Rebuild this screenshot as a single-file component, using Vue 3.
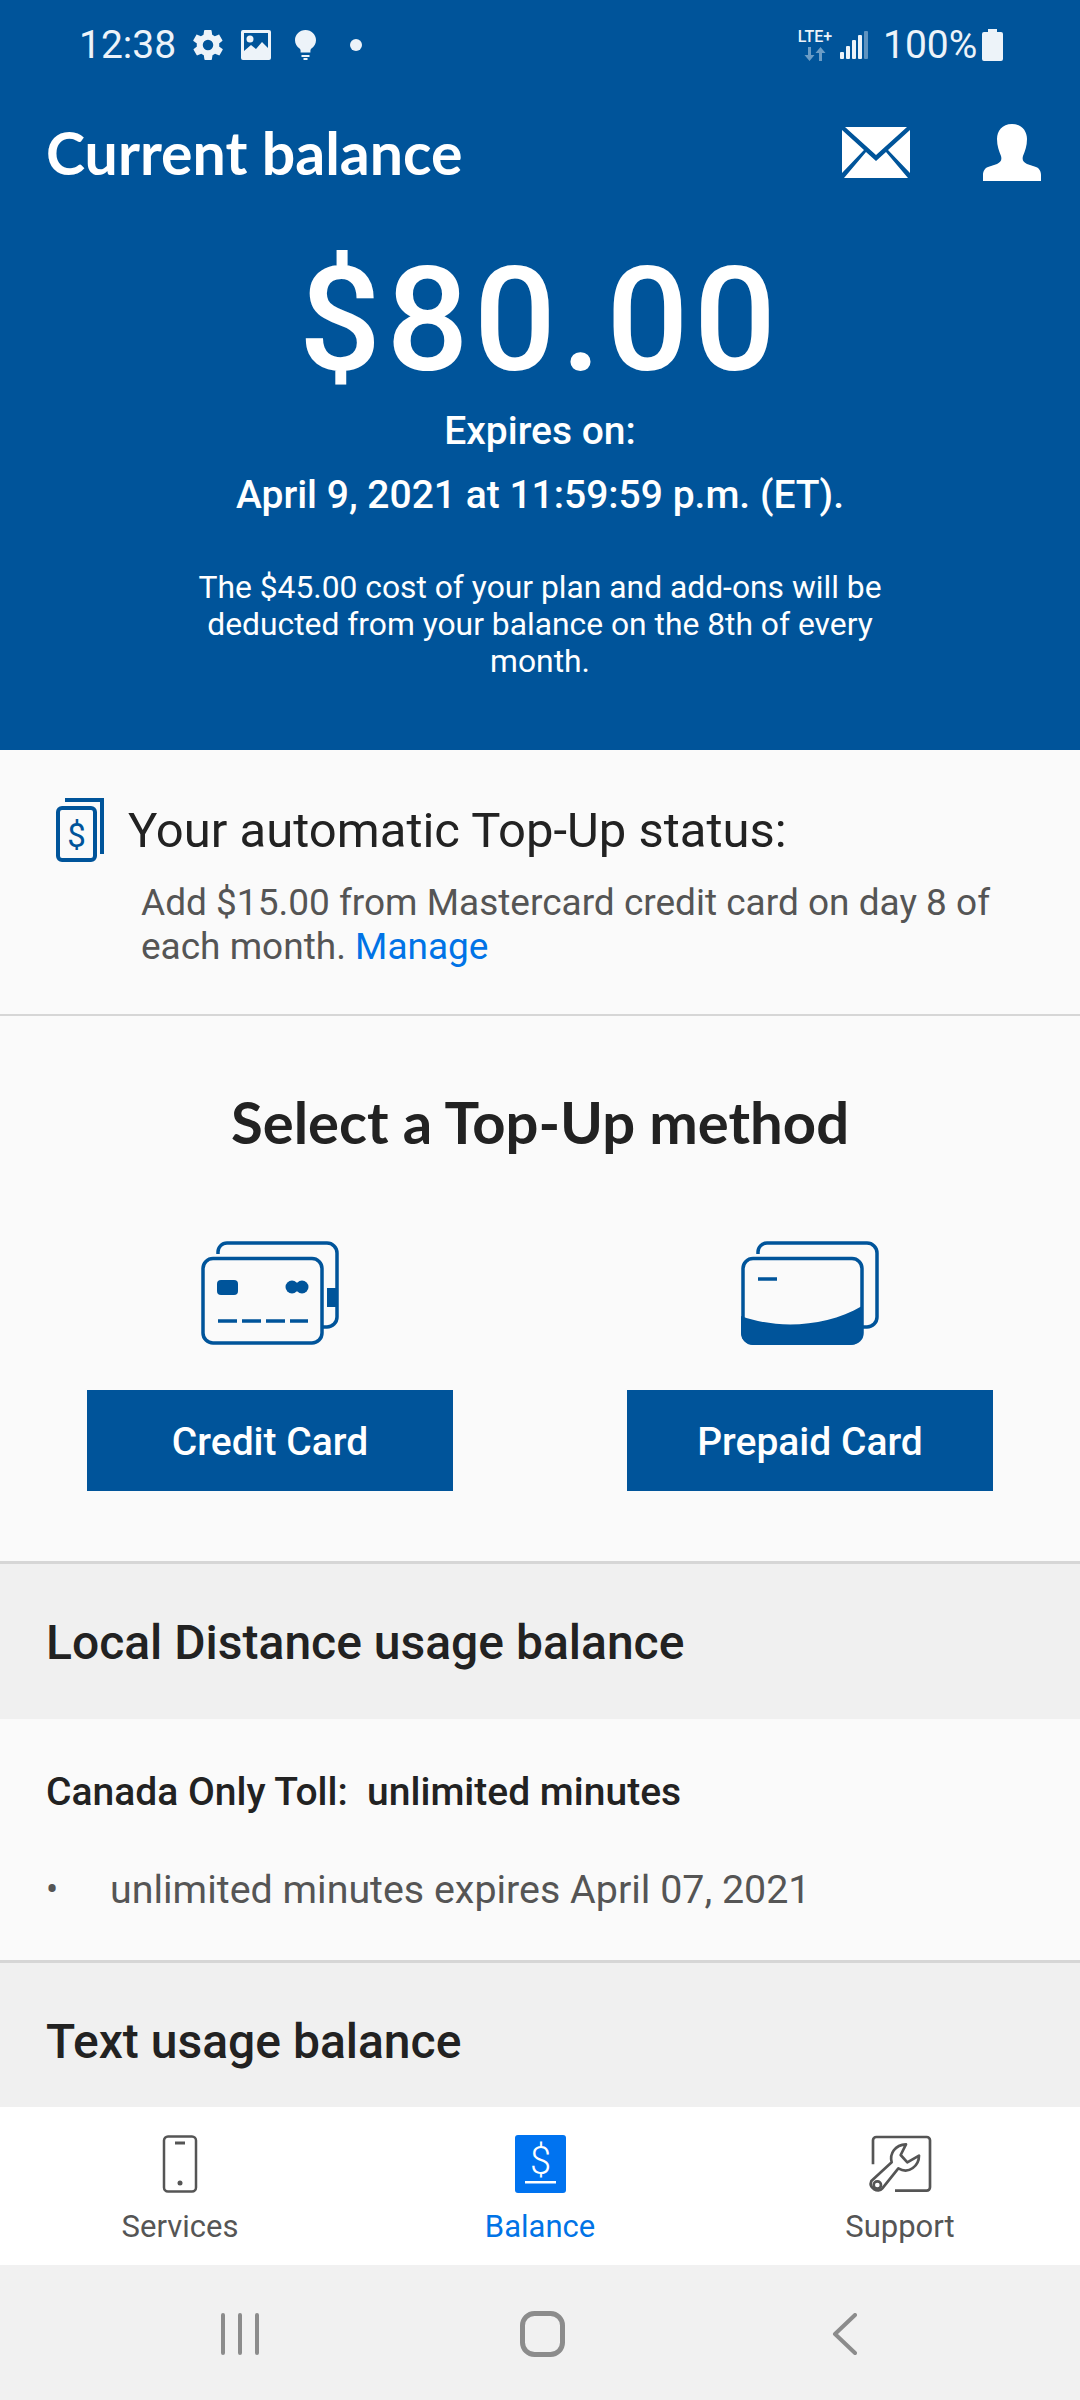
<script setup>
const tabs = [
  { key: 'services', label: 'Services' },
  { key: 'balance', label: 'Balance', active: true },
  { key: 'support', label: 'Support' }
]
</script>

<template>
  <div class="screen">
    <header class="hero">
      <div class="status-bar">
        <span class="clock">12:38</span>
        <svg class="st-gear" viewBox="0 0 24 24"><path fill-rule="evenodd" d="M19.4 13c.1-.3.1-.7.1-1s0-.7-.1-1l2.1-1.6c.2-.2.2-.4.1-.6l-2-3.5c-.1-.2-.4-.3-.6-.2l-2.5 1c-.5-.4-1.1-.7-1.7-1l-.4-2.6c0-.3-.2-.5-.5-.5h-4c-.3 0-.5.2-.5.5l-.4 2.6c-.6.3-1.2.6-1.7 1l-2.5-1c-.2-.1-.5 0-.6.2l-2 3.5c-.1.2-.1.5.1.6L4.6 11c-.1.3-.1.7-.1 1s0 .7.1 1l-2.1 1.6c-.2.2-.2.4-.1.6l2 3.5c.1.2.4.3.6.2l2.5-1c.5.4 1.1.7 1.7 1l.4 2.6c0 .3.2.5.5.5h4c.3 0 .5-.2.5-.5l.4-2.6c.6-.3 1.2-.6 1.7-1l2.5 1c.2.1.5 0 .6-.2l2-3.5c.1-.2.1-.5-.1-.6L19.4 13zM12 15.500a3.500 3.500 0 1 1 0-7 3.500 3.500 0 0 1 0 7z"/></svg>
        <svg class="st-image" viewBox="0 0 30 30"><path fill-rule="evenodd" d="M2 0h26a2 2 0 0 1 2 2v26a2 2 0 0 1-2 2H2a2 2 0 0 1-2-2V2a2 2 0 0 1 2-2zm1 3v18l7-6 5 4 6-7 6 6V3H3zm6 2.500a3.500 3.500 0 1 1 0 7 3.500 3.500 0 0 1 0-7z"/></svg>
        <svg class="st-bulb" viewBox="0 0 21 30"><path d="M10.500 0C4.700 0 0 4.500 0 10.200c0 3.600 1.900 6.300 4.600 8.300.7.500 1 1.300 1 2.200v1.800h9.800v-1.800c0-.9.300-1.700 1-2.200 2.700-2 4.600-4.700 4.600-8.300C21 4.500 16.300 0 10.500 0zM6.500 25h8v2h-8zM8.500 28h4v2h-4z"/></svg>
        <span class="st-dot"></span>
        <span class="st-spacer"></span>
        <span class="st-net">
          <span class="st-lte">LTE+</span>
          <svg class="st-arrows" viewBox="0 0 22 14"><path d="M4 0h3v8h3.500L5.500 14 .5 8H4zM15 14h3V6h3.500L16.500 0l-5 6H15z"/></svg>
        </span>
        <svg class="st-signal" viewBox="0 0 28 28">
          <rect x="0" y="21" width="4" height="7" rx="1" />
          <rect x="6" y="15" width="4" height="13" rx="1" />
          <rect x="12" y="9" width="4" height="19" rx="1" />
          <rect x="18" y="4" width="4" height="24" rx="1" />
          <rect x="24" y="0" width="4" height="28" rx="1" opacity=".4" />
        </svg>
        <span class="st-level">100%</span>
        <svg class="st-battery" viewBox="0 0 21 32"><path d="M6 0h9v3h4a2 2 0 0 1 2 2v25a2 2 0 0 1-2 2H2a2 2 0 0 1-2-2V5a2 2 0 0 1 2-2h4z"/></svg>
      </div>

      <div class="hero-top">
        <h1 class="hero-title">Current balance</h1>
        <svg class="ic-mail" viewBox="0 0 68 51">
          <path d="M3 0h62L34 28zM0 3l22 20L0 46zM68 3v43L46 23zM24 25l10 9 10-9 22 26H2z" />
        </svg>
        <svg class="ic-user" viewBox="0 0 58 57">
          <path d="M29 0c10 0 15 7 15 15 0 7-2 12-4 17-1 4 0 6 4 8l9 3c3 1 5 4 5 8v6H0v-6c0-4 2-7 5-8l9-3c4-2 5-4 4-8-2-5-4-10-4-17C14 7 19 0 29 0z" />
        </svg>
      </div>

      <div class="amount">$80.00</div>
      <div class="expiry">Expires on:</div>
      <div class="expiry">April 9, 2021 at 11:59:59 p.m. (ET).</div>
      <p class="hero-note">The $45.00 cost of your plan and add-ons will be deducted from your balance on the 8th of every month.</p>
    </header>

    <section class="auto">
      <div class="auto-head">
        <svg class="ic-doc" viewBox="0 0 48 64" fill="none" stroke="#00549a">
          <path d="M9 2h37v54" stroke-width="4" />
          <rect x="2" y="10" width="37" height="52" rx="4" stroke-width="4" />
          <text x="20.500" y="49" text-anchor="middle" class="doc-dollar">$</text>
        </svg>
        <span>Your automatic Top-Up status:</span>
      </div>
      <p class="auto-text">Add $15.00 from Mastercard credit card on day 8 of each month. <a class="manage">Manage</a></p>
    </section>

    <section class="method">
      <h2 class="method-title">Select a Top-Up method</h2>
      <div class="method-grid">
        <div class="method-col">
          <svg class="ic-card" viewBox="0 0 138 104" fill="none" stroke="#00549a" stroke-width="3.500">
            <path d="M17 13v-2a9 9 0 0 1 9-9h100a10 10 0 0 1 10 10v64a10 10 0 0 1-10 10h-4" />
            <rect x="2" y="17.500" width="119" height="84.500" rx="10" />
            <rect x="16" y="39" width="21" height="15" rx="4" fill="#00549a" stroke="none" />
            <ellipse cx="91" cy="46" rx="6.500" ry="6.500" fill="#00549a" stroke="none" />
            <ellipse cx="101" cy="46" rx="6.500" ry="6.500" fill="#00549a" stroke="none" />
            <rect x="126" y="47" width="9" height="19" fill="#00549a" stroke="none" />
            <path d="M17 80h90" stroke-dasharray="19 5" />
          </svg>
          <button class="method-btn">Credit Card</button>
        </div>
        <div class="method-col">
          <svg class="ic-card" viewBox="0 0 138 104" fill="none" stroke="#00549a" stroke-width="3.500">
            <path d="M17 13v-2a9 9 0 0 1 9-9h100a10 10 0 0 1 10 10v64a10 10 0 0 1-10 10h-4" />
            <rect x="2" y="17.500" width="119" height="84.500" rx="10" />
            <path d="M17 38h19" />
            <path d="M0 75c34 13 84 12 121-10v27a12 12 0 0 1-12 12H12A12 12 0 0 1 0 92z" fill="#00549a" stroke="none" />
          </svg>
          <button class="method-btn">Prepaid Card</button>
        </div>
      </div>
    </section>

    <h3 class="usage-head">Local Distance usage balance</h3>
    <section class="usage-body">
      <div class="usage-line">Canada Only Toll:&nbsp; unlimited minutes</div>
      <div class="usage-item">
        <span class="usage-bullet">•</span>
        <span>unlimited minutes expires April 07, 2021</span>
      </div>
    </section>
    <h3 class="usage-head usage-head-last">Text usage balance</h3>

    <nav class="tabbar">
      <div v-for="tab in tabs" :key="tab.key" class="tab" :class="{ 'tab-active': tab.active }">
        <svg v-if="tab.key === 'services'" class="tab-icon" viewBox="0 0 60 58" fill="none" stroke="#555" stroke-width="2.500">
          <rect x="14" y="1.500" width="32" height="55" rx="4" />
          <path d="M25 8h10" stroke-width="3" />
          <circle cx="30" cy="48" r="2.500" fill="#555" stroke="none" />
        </svg>
        <svg v-else-if="tab.key === 'balance'" class="tab-icon" viewBox="0 0 60 58">
          <rect x="5" y="0" width="51" height="58" rx="3" fill="#0073f0" />
          <text x="30.500" y="39" text-anchor="middle" class="tab-dollar">$</text>
          <rect x="15" y="46" width="31" height="2.500" fill="#fff" />
        </svg>
        <svg v-else class="tab-icon" viewBox="60 30 180 174" fill="none" stroke="#555" stroke-width="8" stroke-linejoin="round">
          <path d="M69 118V46a10 10 0 0 1 10-10h151a10 10 0 0 1 10 10v141a10 10 0 0 1-10 10h-95" />
          <path d="M64 168l61-56c-7-27 10-52 43-54l-16 32 20 22 35-20c0 28-29 58-62 38l-48 60c-12 15-42 0-33-22z" />
          <circle cx="82" cy="180" r="11" />
        </svg>
        <span class="tab-label">{{ tab.label }}</span>
      </div>
    </nav>

    <div class="sys-nav">
      <svg class="nav-menu" viewBox="0 0 40 42" fill="none" stroke="#8c8c8c" stroke-width="4" stroke-linecap="round">
        <path d="M3 2v38M20 2v38M37 2v38" />
      </svg>
      <svg class="nav-home" viewBox="0 0 45 46" fill="none" stroke="#8c8c8c" stroke-width="5">
        <rect x="2.500" y="2.500" width="40" height="41" rx="12" />
      </svg>
      <svg class="nav-back" viewBox="0 0 25 42" fill="none" stroke="#8c8c8c" stroke-width="4" stroke-linecap="round" stroke-linejoin="round">
        <path d="M23 2L3 21l20 19" />
      </svg>
    </div>
  </div>
</template>

<style>
html, body {
  margin: 0;
  background: #fff;
}
</style>

<style scoped>
.screen {
  width: 1080px;
  height: 2400px;
  overflow: hidden;
  display: flex;
  flex-direction: column;
  font-family: Roboto, "Liberation Sans", sans-serif;
  background: #fafafa;
}

.hero {
  height: 750px;
  flex: none;
  box-sizing: border-box;
  background: #00549a;
  color: #fff;
  text-align: center;
}

.status-bar {
  height: 80px;
  padding: 10px 77px 0 79px;
  display: flex;
  align-items: center;
  color: #edf3f9;
  fill: #edf3f9;
  font-size: 39px;
  line-height: 1;
  box-sizing: border-box;
}

.clock {
  width: 114px;
  text-align: left;
}

.st-gear { width: 36px; height: 36px; margin-right: 15px; margin-left: -3px; }
.st-image { width: 30px; height: 30px; margin-right: 24px; }
.st-bulb { width: 21px; height: 30px; margin-right: 34px; }
.st-dot { width: 12px; height: 12px; border-radius: 50%; background: #edf3f9; }
.st-spacer { flex: 1; }

.st-net {
  width: 36px;
  display: flex;
  flex-direction: column;
  align-items: center;
  margin-right: 7px;
}

.st-lte {
  font-size: 16px;
  font-weight: 500;
  line-height: 15px;
}

.st-arrows { width: 22px; height: 14px; margin-top: 3px; opacity: .45; }
.st-signal { width: 28px; height: 28px; margin-right: 15px; }
.st-level { width: 92px; text-align: left; }
.st-battery { width: 21px; height: 32px; margin-left: 7px; }

.hero-top {
  height: 145px;
  padding: 0 39px 0 46px;
  display: flex;
  align-items: center;
  box-sizing: border-box;
}

.hero-title {
  margin: 0;
  flex: 1;
  text-align: left;
  font-family: Lato, sans-serif;
  font-size: 59px;
  font-weight: 700;
}

.ic-mail { width: 68px; height: 51px; fill: #fff; margin-right: 73px; }
.ic-user { width: 58px; height: 57px; fill: #fff; }

.amount {
  font-size: 145px;
  font-weight: 500;
  letter-spacing: 5px;
  line-height: 158px;
  margin-top: 16px;
}

.expiry {
  font-size: 39px;
  font-weight: 500;
  line-height: 64px;
}

.hero-note {
  width: 760px;
  margin: 42px auto 0;
  font-size: 31.8px;
  line-height: 37px;
}

.auto {
  height: 266px;
  flex: none;
  box-sizing: border-box;
  border-bottom: 2px solid #d6d6d6;
  background: #fafafa;
  padding: 50px 40px 0 56px;
}

.auto-head {
  display: flex;
  align-items: center;
  gap: 24px;
  font-size: 49px;
  color: #222;
  line-height: 62px;
}

.ic-doc { width: 48px; height: 64px; flex: none; margin-top: -3px; }

.doc-dollar {
  font-family: Roboto, sans-serif;
  font-size: 33px;
  fill: #00549a;
  stroke: none;
}

.auto-text {
  margin: 19px 0 0 85px;
  font-size: 37px;
  line-height: 44px;
  color: #555;
}

.manage { color: #0073e6; }

.method {
  height: 548px;
  flex: none;
  box-sizing: border-box;
  border-bottom: 3px solid #d6d6d6;
  padding-top: 68px;
  background: #fafafa;
}

.method-title {
  margin: 0;
  text-align: center;
  font-family: Lato, sans-serif;
  font-size: 58px;
  font-weight: 700;
  line-height: 76px;
  color: #222;
}

.method-grid {
  margin-top: 81px;
  padding: 0 87px;
  display: flex;
  justify-content: space-between;
}

.method-col {
  width: 366px;
  display: flex;
  flex-direction: column;
  align-items: center;
}

.ic-card {
  width: 138px;
  height: 104px;
}

.method-btn {
  width: 366px;
  height: 101px;
  margin-top: 45px;
  padding: 2px 0 0;
  border: none;
  background: #00549a;
  color: #fff;
  font-family: Roboto, sans-serif;
  font-size: 39px;
  font-weight: 500;
}

.usage-head {
  height: 155px;
  flex: none;
  margin: 0;
  box-sizing: border-box;
  padding: 0 46px;
  line-height: 157px;
  background: #f0f0f0;
  font-size: 48px;
  font-weight: 500;
  color: #222;
}

.usage-head-last {
  height: 144px;
}

.usage-body {
  height: 244px;
  flex: none;
  box-sizing: border-box;
  border-bottom: 3px solid #d6d6d6;
  padding: 48px 46px 0;
  background: #fafafa;
}

.usage-line {
  font-size: 39px;
  font-weight: 500;
  line-height: 50px;
  color: #222;
}

.usage-item {
  display: flex;
  margin-top: 48px;
  font-size: 39.4px;
  line-height: 50px;
  color: #555;
}

.usage-bullet {
  width: 64px;
  flex: none;
  font-size: 36px;
}

.tabbar {
  height: 158px;
  flex: none;
  background: #fff;
  display: flex;
  padding-top: 28px;
  box-sizing: border-box;
}

.tab {
  width: 360px;
  display: flex;
  flex-direction: column;
  align-items: center;
  color: #555;
}

.tab-active { color: #0073e6; }

.tab-icon {
  width: 60px;
  height: 58px;
  overflow: visible;
}

.tab-label {
  font-size: 31px;
  line-height: 40px;
  margin-top: 14px;
}

.tab-dollar {
  font-family: Roboto, sans-serif;
  font-size: 38px;
  font-weight: 300;
  fill: #fff;
}

.sys-nav {
  flex: 1;
  padding-top: 2px;
  background: #f1f1f1;
  display: flex;
  align-items: center;
}

.nav-menu { width: 40px; height: 42px; margin-left: 220px; }
.nav-home { width: 45px; height: 46px; margin-left: 260px; }
.nav-back { width: 25px; height: 42px; margin-left: 267px; }
</style>
